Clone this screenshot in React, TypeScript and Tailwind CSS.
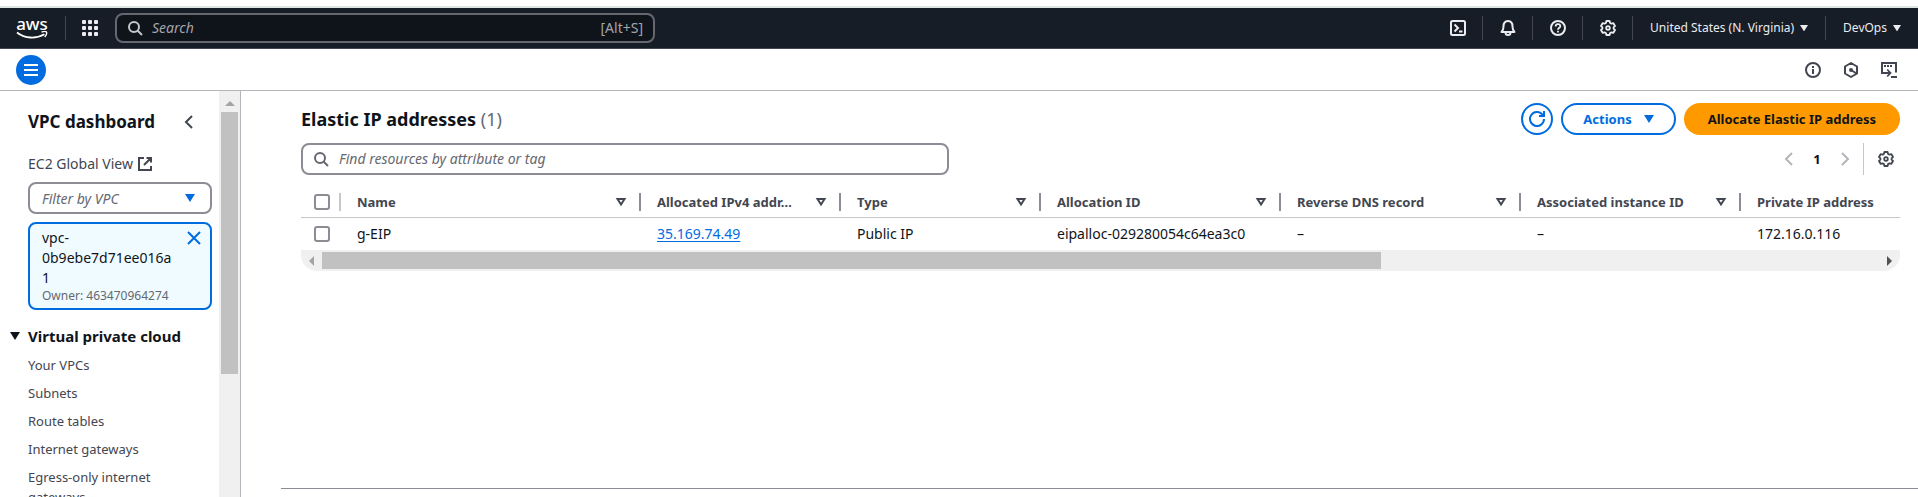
import type { ReactNode } from 'react';

type IconProps = { className?: string };

function Svg({ className = '', children }: { className?: string; children: ReactNode }) {
  return (
    <svg
      viewBox="0 0 16 16"
      fill="none"
      stroke="currentColor"
      strokeWidth="2"
      aria-hidden="true"
      className={`h-4 w-4 shrink-0 ${className}`}
    >
      {children}
    </svg>
  );
}

const SearchIcon = ({ className }: IconProps) => (
  <Svg className={className}>
    <circle cx="7" cy="7" r="5" />
    <path d="m15 15-4.5-4.5" />
  </Svg>
);

const GearIcon = ({ className }: IconProps) => (
  <Svg className={className}>
    <path
      strokeWidth="1.8"
      strokeLinejoin="round"
      d="M6.4 1h3.2l.5 1.9 1.4.8 1.9-.5L15 6l-1.4 1.3v1.4L15 10l-1.6 2.8-1.9-.5-1.4.8-.5 1.9H6.4l-.5-1.9-1.4-.8-1.9.5L1 10l1.4-1.3V7.3L1 6l1.6-2.8 1.9.5 1.4-.8z"
    />
    <circle cx="8" cy="8" r="1.8" strokeWidth="1.8" />
  </Svg>
);

const CloudShellIcon = () => (
  <Svg>
    <rect x="1" y="1" width="14" height="14" rx="1.5" />
    <path d="M4.500 4.500 8 8l-3.500 3.500M9 11.500h3.500" />
  </Svg>
);

const BellIcon = () => (
  <Svg>
    <path strokeLinejoin="round" d="M1.500 12c1.500-1.200 2-2.500 2-5.500C3.500 3.500 5 1 8 1s4.500 2.500 4.500 5.500c0 3 .5 4.300 2 5.500z" />
    <path d="M5.500 12.500c0 1.500 1 2.500 2.500 2.500s2.500-1 2.500-2.500" />
  </Svg>
);

const HelpIcon = () => (
  <Svg>
    <circle cx="8" cy="8" r="7" />
    <path strokeWidth="1.800" d="M5.700 6.500C5.700 5 6.700 4.200 8 4.200s2.300.8 2.300 2C10.300 7.900 8 7.800 8 9.800M8 10.800v1.800" />
  </Svg>
);

const InfoIcon = () => (
  <Svg>
    <circle cx="8" cy="8" r="7" />
    <path d="M8 7v5M8 4v2" />
  </Svg>
);

const HexIcon = () => (
  <Svg>
    <path strokeLinejoin="round" d="m8 1 6 3.500v7L8 15l-6-3.500v-7z" />
    <circle cx="8" cy="8" r="2" fill="currentColor" stroke="none" />
    <path d="m8 8 5.500 3.500" />
  </Svg>
);

const TerminalIcon = () => (
  <Svg className="overflow-visible">
    <path d="M4.500 11H1V1h14v9.500M10 15h6" />
    <path strokeWidth="1.800" d="M3 4h2M6 4h2M9 4h2M3.500 11H9M6.200 7.500 9.500 11l-3.300 3.500" />
  </Svg>
);

const RefreshIcon = () => (
  <Svg>
    <path d="M15 8a7 7 0 1 1-1.700-4.600L14 5" />
    <path d="M15 0v5h-5" />
  </Svg>
);

const ExternalIcon = () => (
  <Svg>
    <path d="M7 2H2v12h12v-4M9.500 2H14v4.500M13.500 2.500 7 9" />
  </Svg>
);

const ChevronLeft = ({ className }: IconProps) => (
  <Svg className={className}>
    <path d="M11 2 5 8l6 6" />
  </Svg>
);

const ChevronRight = ({ className }: IconProps) => (
  <Svg className={className}>
    <path d="m5 2 6 6-6 6" />
  </Svg>
);

const CloseIcon = () => (
  <Svg>
    <path d="m2 2 12 12M14 2 2 14" />
  </Svg>
);

const Caret = ({ className = 'w-[10px]' }: IconProps) => (
  <svg viewBox="0 0 10 8" aria-hidden="true" className={`shrink-0 ${className}`}>
    <path d="M0 0h10L5 8z" fill="currentColor" />
  </svg>
);

const SortIcon = () => (
  <Svg>
    <path d="M4.500 5h7L8 10.500z" />
  </Svg>
);

const Divider = () => <div className="h-6 w-px shrink-0 bg-[#424650]" />;

function TopBar() {
  return (
    <header className="flex h-[41px] shrink-0 items-center border-b border-[#424650] bg-[#161d26] text-[#ebebf0]">
      <a href="#home" aria-label="AWS home" className="ml-4 flex w-8 flex-col items-center text-white">
        <span className="text-[17px] leading-[14px] font-medium">aws</span>
        <svg viewBox="0 0 32 8" aria-hidden="true" className="h-2 w-8">
          <path d="M1 1.500C9 7.800 20 8 28.500 3.200" fill="none" stroke="currentColor" strokeWidth="1.800" />
          <path d="M25.500 1.200c2-.9 4.500-.9 5 0 .4 1-.4 3.300-1.800 4.800" fill="none" stroke="currentColor" strokeWidth="1.400" />
        </svg>
      </a>
      <div className="ml-[17px] h-6 w-px bg-[#424650]" />
      <button type="button" aria-label="Services" className="ml-4">
        <svg viewBox="0 0 16 16" fill="currentColor" aria-hidden="true" className="h-4 w-4">
          {[0, 6, 12].map((y) =>
            [0, 6, 12].map((x) => <rect key={`${x}-${y}`} x={x} y={y} width="4" height="4" rx="1" />),
          )}
        </svg>
      </button>
      <label className="ml-[17px] flex h-[30px] w-[540px] items-center gap-[9px] rounded-lg border-2 border-[#656871] bg-[#0f141a] pr-[10px] pl-[10px] text-[#c6c6cd]">
        <SearchIcon />
        <input
          type="text"
          aria-label="Search"
          placeholder="Search"
          className="min-w-0 flex-1 bg-transparent text-[14px] leading-5 outline-none placeholder:text-[#a4a4ad] placeholder:italic"
        />
        <span className="text-[14px] leading-5 text-[#a4a4ad]">[Alt+S]</span>
      </label>
      <nav aria-label="Account" className="ml-auto flex items-center text-[12px] leading-4">
        <button type="button" aria-label="CloudShell" className="flex w-[49px] justify-center"><CloudShellIcon /></button>
        <Divider />
        <button type="button" aria-label="Notifications" className="flex w-[49px] justify-center"><BellIcon /></button>
        <Divider />
        <button type="button" aria-label="Help" className="flex w-[49px] justify-center"><HelpIcon /></button>
        <Divider />
        <button type="button" aria-label="Settings" className="flex w-[49px] justify-center"><GearIcon /></button>
        <Divider />
        <button type="button" className="flex items-center gap-[6px] px-[17px]">
          United States (N. Virginia)
          <Caret className="w-2" />
        </button>
        <Divider />
        <button type="button" className="flex items-center gap-[6px] px-[17px]">
          DevOps
          <Caret className="w-2" />
        </button>
      </nav>
    </header>
  );
}

function ToolBar() {
  return (
    <div className="flex h-[42px] shrink-0 items-center justify-between border-b border-[#b4b4bb] pr-[21px] pl-4 text-[#424650]">
      <button
        type="button"
        aria-label="Toggle navigation"
        className="flex h-[30px] w-[30px] items-center justify-center rounded-full bg-[#006ce0] text-white"
      >
        <Svg>
          <path d="M1 3h14M1 8h14M1 13h14" />
        </Svg>
      </button>
      <div className="flex items-center gap-[22px]">
        <button type="button" aria-label="Info"><InfoIcon /></button>
        <button type="button" aria-label="Diagnostics"><HexIcon /></button>
        <button type="button" aria-label="Open terminal"><TerminalIcon /></button>
      </div>
    </div>
  );
}

const LINKS = ['Your VPCs', 'Subnets', 'Route tables', 'Internet gateways', 'Egress-only internet gateways'];

function Sidebar() {
  return (
    <aside className="flex w-[241px] shrink-0 overflow-hidden border-r border-[#b4b4bb]">
      <div className="min-w-0 flex-1 pt-5 pr-[7px] pl-7">
        <div className="flex items-center justify-between pr-[15px]">
          <h2 className="text-[17px] leading-[22px] font-bold text-[#0f141a]">VPC dashboard</h2>
          <button type="button" aria-label="Close navigation" className="text-[#424650]"><ChevronLeft /></button>
        </div>
        <a href="#global" className="mt-[21px] flex items-center gap-1 text-[14px] leading-5 text-[#424650]">
          EC2 Global View
          <ExternalIcon />
        </a>
        <button
          type="button"
          aria-haspopup="listbox"
          className="mt-2 flex h-8 w-full items-center justify-between rounded-lg border-2 border-[#8c8c94] pr-[15px] pl-3 text-[14px] text-[#656871] italic"
        >
          Filter by VPC
          <Caret className="w-[10px] text-[#006ce0]" />
        </button>
        <div className="mt-2 flex items-start justify-between rounded-lg border-2 border-[#006ce0] bg-[#f0fbff] py-1 pr-2 pl-3">
          <div className="w-[132px] text-[14px] leading-5 text-[#0f141a]">
            <p className="wrap-anywhere">vpc-0b9ebe7d71ee016a1</p>
            <p className="text-[12px] leading-4 whitespace-nowrap text-[#656871]">Owner: 463470964274</p>
          </div>
          <button type="button" aria-label="Remove filter" className="mt-[2px] text-[#006ce0]"><CloseIcon /></button>
        </div>
        <button type="button" className="mt-4 -ml-[18px] flex items-center gap-2 text-[15px] leading-5 font-bold whitespace-nowrap text-[#0f141a]">
          <Caret />
          Virtual private cloud
        </button>
        <ul className="mt-[9px] flex flex-col gap-2 pr-8 text-[13px] leading-5 text-[#424650]">
          {LINKS.map((l) => (
            <li key={l}><a href="#nav" className="block">{l}</a></li>
          ))}
        </ul>
      </div>
      <div aria-hidden="true" className="flex w-[21px] flex-col items-center bg-[#f0f0f0]">
        <div className="flex h-[21px] items-center pt-1">
          <svg viewBox="0 0 10 5" className="w-[10px]"><path d="M0 5 5 0l5 5z" fill="#a3a3a3" /></svg>
        </div>
        <div className="h-[262px] w-[17px] shrink-0 bg-[#c1c1c1]" />
      </div>
    </aside>
  );
}

const COLUMNS = [
  { label: 'Name', value: 'g-EIP' },
  { label: 'Allocated IPv4 addr…', value: '35.169.74.49', link: true },
  { label: 'Type', value: 'Public IP' },
  { label: 'Allocation ID', value: 'eipalloc-029280054c64ea3c0' },
  { label: 'Reverse DNS record', value: '–' },
  { label: 'Associated instance ID', value: '–' },
  { label: 'Private IP address', value: '172.16.0.116', last: true },
];

function Check({ label }: { label: string }) {
  return (
    <input
      type="checkbox"
      aria-label={label}
      className="ml-[13px] block h-4 w-4 appearance-none rounded-[3px] border-2 border-[#8c8c94] bg-white"
    />
  );
}

function AddressTable() {
  return (
    <div className="mt-3">
      <table className="w-full table-fixed text-left text-[14px] leading-5 text-[#0f141a]">
        <colgroup>
          <col className="w-[40px]" />
          <col className="w-[300px]" />
          <col className="w-[200px]" />
          <col className="w-[200px]" />
          <col className="w-[240px]" />
          <col className="w-[240px]" />
          <col className="w-[220px]" />
          <col />
        </colgroup>
        <thead>
          <tr className="h-[30px] border-b border-[#c6c6cd] text-[13px] text-[#424650]">
            <th className="p-0">
              <div className="flex h-[18px] items-center border-r-2 border-[#c6c6cd]">
                <Check label="Select all" />
              </div>
            </th>
            {COLUMNS.map((c) => (
              <th key={c.label} className="p-0 font-bold">
                <div className={`flex h-[18px] items-center justify-between pr-[10px] pl-4 whitespace-nowrap ${c.last ? '' : 'border-r-2 border-[#8c8c94]'}`}>
                  {c.label}
                  {!c.last && <button type="button" aria-label={`Sort by ${c.label}`}><SortIcon /></button>}
                </div>
              </th>
            ))}
          </tr>
        </thead>
        <tbody>
          <tr className="h-[33px]">
            <td className="p-0"><Check label="Select g-EIP" /></td>
            {COLUMNS.map((c) => (
              <td key={c.label} className="p-0 pl-4 whitespace-nowrap">
                {c.link ? <a href="#ip" className="text-[#006ce0] underline underline-offset-2">{c.value}</a> : c.value}
              </td>
            ))}
          </tr>
        </tbody>
      </table>
      <div aria-hidden="true" className="flex h-[21px] items-center rounded-b-2xl bg-[#f0f0f0]">
        <div className="flex w-[21px] justify-center">
          <svg viewBox="0 0 5 10" className="h-[10px]"><path d="M5 0 0 5l5 5z" fill="#a3a3a3" /></svg>
        </div>
        <div className="flex-1">
          <div className="h-[17px] w-[68%] bg-[#c1c1c1]" />
        </div>
        <div className="flex w-[21px] justify-center">
          <svg viewBox="0 0 5 10" className="h-[10px]"><path d="m0 0 5 5-5 5z" fill="#505050" /></svg>
        </div>
      </div>
    </div>
  );
}

export default function App() {
  return (
    <div className="flex h-screen flex-col overflow-hidden bg-white pt-[6px] font-['Noto_Sans',sans-serif]">
      <div className="h-[2px] shrink-0 bg-[#dfe5e1]" />
      <TopBar />
      <ToolBar />
      <div className="flex min-h-0 flex-1">
        <Sidebar />
        <div className="flex min-w-0 flex-1 flex-col pl-10">
          <main className="flex-1 pt-3 pr-[18px] pl-5">
            <div className="flex h-8 items-center justify-between">
              <h1 className="text-[18px] leading-[22px] font-bold text-[#0f141a]">
                Elastic IP addresses <span className="font-normal text-[#656871]">(1)</span>
              </h1>
              <div className="flex items-center gap-2 text-[13px] leading-5 font-bold">
                <button
                  type="button"
                  aria-label="Refresh"
                  className="flex h-8 w-8 items-center justify-center rounded-full border-2 border-[#006ce0] text-[#006ce0]"
                >
                  <RefreshIcon />
                </button>
                <button type="button" className="flex h-8 items-center gap-3 rounded-full border-2 border-[#006ce0] px-5 text-[#006ce0]">
                  Actions
                  <Caret />
                </button>
                <button type="button" className="h-8 rounded-full bg-[#ff9900] px-6 text-[#0f141a]">
                  Allocate Elastic IP address
                </button>
              </div>
            </div>
            <div className="mt-2 flex items-center justify-between">
              <label className="flex h-8 w-[648px] items-center gap-[10px] rounded-lg border-2 border-[#8c8c94] px-[10px] text-[#656871]">
                <SearchIcon />
                <input
                  type="text"
                  aria-label="Find resources"
                  placeholder="Find resources by attribute or tag"
                  className="min-w-0 flex-1 bg-transparent text-[14px] leading-5 outline-none placeholder:text-[#656871] placeholder:italic"
                />
              </label>
              <div className="flex h-8 items-center text-[#424650]">
                <button type="button" aria-label="Previous page" className="text-[#b4b4bb]"><ChevronLeft /></button>
                <button type="button" className="w-10 text-center text-[13px] leading-5 font-bold text-[#0f141a]">1</button>
                <button type="button" aria-label="Next page" className="text-[#b4b4bb]"><ChevronRight /></button>
                <div className="ml-[10px] h-8 w-px bg-[#c6c6cd]" />
                <button type="button" aria-label="Preferences" className="mr-[6px] ml-[14px]"><GearIcon /></button>
              </div>
            </div>
            <AddressTable />
          </main>
          <div className="h-[9px] shrink-0 border-t border-[#8c8c94]" />
        </div>
      </div>
    </div>
  );
}
